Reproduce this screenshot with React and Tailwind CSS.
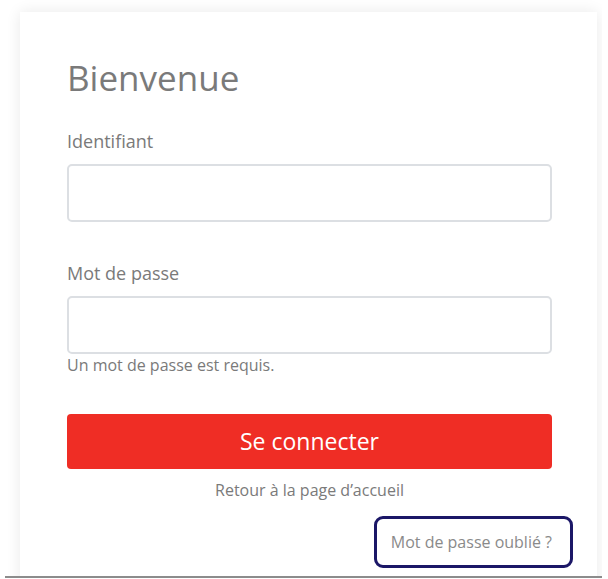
export default function App() {
  return (
    <div className="h-[579px] w-[608px] overflow-hidden bg-white" style={{ fontFamily: '"Open Sans", sans-serif' }}>
      <div className="h-[578px] ml-[5px] mr-[6px] border-b-2 border-[#8c8c8c] overflow-hidden">
        <div className="pt-3 pl-[15px] pr-[5px]">
          {/* CARD */}
          <div className="bg-white shadow-[0_0_14px_rgba(0,0,0,0.09)] pl-[47px] pr-[45px] pt-[44px] pb-10">
            <h1 className="text-[35px] leading-[44px] text-[#7a7a7a] font-normal">Bienvenue</h1>

            <label className="block mt-[29px] text-[18px] leading-6 text-[#7a7a7a]">Identifiant</label>
            <input className="block mt-[11px] w-full h-[58px] border-2 border-[#dcdfe3] rounded-[5px] outline-none" />

            <label className="block mt-[39px] text-[18px] leading-6 text-[#7a7a7a]">Mot de passe</label>
            <input type="password" className="block mt-[11px] w-full h-[58px] border-2 border-[#dcdfe3] rounded-[5px] outline-none" />
            <p className="mt-[1px] text-[16px] leading-5 text-[#7a7a7a]">Un mot de passe est requis.</p>

            <button className="mt-[39px] w-full h-[55px] bg-[#ef2d25] rounded-[4px] text-white text-[23px]">
              Se connecter
            </button>

            <p className="mt-[11px] text-center text-[16px] leading-5 text-[#7a7a7a]">Retour à la page d’accueil</p>

            <div className="flex justify-end mt-[16px] mr-[-21px]">
              <a className="border-[3px] border-[#1b1767] rounded-[9px] pl-[14px] pr-[18px] py-[13px] text-[16px] leading-5 text-[#8a8a8a]">
                Mot de passe oublié ?
              </a>
            </div>
          </div>
        </div>
      </div>
    </div>
  );
}
